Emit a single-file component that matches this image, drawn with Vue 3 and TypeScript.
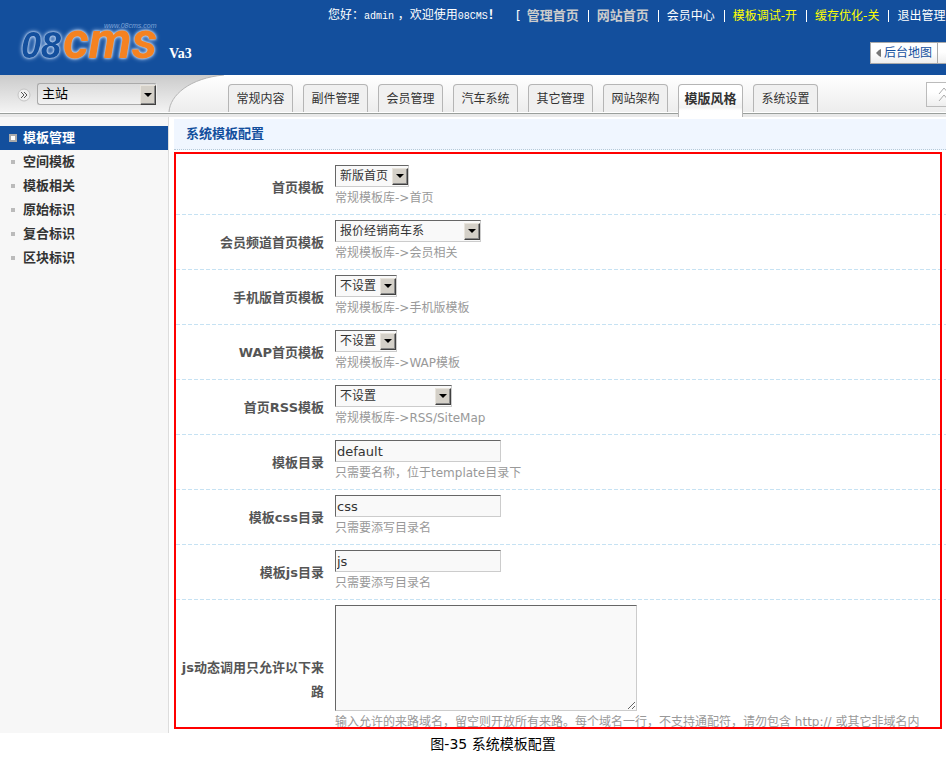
<script setup lang="ts">
import { ref } from 'vue'

interface Field {
  id: string
  label: string
  kind: 'select' | 'text' | 'area'
  value: string
  size?: string
  hint: string
}

const topLinks = [
  { text: '管理首页', tone: 'strong' },
  { text: '网站首页', tone: 'strong' },
  { text: '会员中心', tone: 'plain' },
  { text: '模板调试-开', tone: 'warn' },
  { text: '缓存优化-关', tone: 'warn' },
  { text: '退出管理', tone: 'plain' },
]
const tabs = ['常规内容', '副件管理', '会员管理', '汽车系统', '其它管理', '网站架构', '模版风格', '系统设置']
const menu = ['模板管理', '空间模板', '模板相关', '原始标识', '复合标识', '区块标识']
const activeTab = ref('模版风格')
const activeItem = ref('模板管理')

const fields = ref<Field[]>([
  { id: 'home', label: '首页模板', kind: 'select', value: '新版首页', size: 'w-sm', hint: '常规模板库->首页' },
  { id: 'member', label: '会员频道首页模板', kind: 'select', value: '报价经销商车系', size: 'w-lg', hint: '常规模板库->会员相关' },
  { id: 'mobile', label: '手机版首页模板', kind: 'select', value: '不设置', size: 'w-xs', hint: '常规模板库->手机版模板' },
  { id: 'wap', label: 'WAP首页模板', kind: 'select', value: '不设置', size: 'w-xs', hint: '常规模板库->WAP模板' },
  { id: 'rss', label: '首页RSS模板', kind: 'select', value: '不设置', size: 'w-md', hint: '常规模板库->RSS/SiteMap' },
  { id: 'dir', label: '模板目录', kind: 'text', value: 'default', hint: '只需要名称，位于template目录下' },
  { id: 'css', label: '模板css目录', kind: 'text', value: 'css', hint: '只需要添写目录名' },
  { id: 'js', label: '模板js目录', kind: 'text', value: 'js', hint: '只需要添写目录名' },
  { id: 'origin', label: 'js动态调用只允许以下来路', kind: 'area', value: '', hint: '输入允许的来路域名，留空则开放所有来路。每个域名一行，不支持通配符，请勿包含 http:// 或其它非域名内' },
])
</script>

<template>
  <div class="page">
    <header class="banner">
      <div class="brand">
        <svg class="logo" width="150" height="50" viewBox="0 0 150 50" role="img" aria-label="08CMS">
          <g class="logo-glow">
            <text class="logo-num" x="5" y="43">08</text>
            <text class="logo-cms" x="47" y="43">cms</text>
          </g>
          <text class="logo-url" x="88" y="13">www.08cms.com</text>
        </svg>
        <span class="version">Va3</span>
      </div>
      <div class="banner-side">
        <nav class="top-links">
          <span class="greet">您好：<span class="mono">admin</span> ，欢迎使用<span class="mono">08CMS</span><b>！</b></span>
          <span class="bracket">[</span>
          <template v-for="(link, i) in topLinks" :key="link.text">
            <span v-if="i" class="bar"></span>
            <a href="#" :class="link.tone">{{ link.text }}</a>
          </template>
        </nav>
        <div class="map-buttons">
          <button type="button" class="map">
            <svg width="5" height="8" viewBox="0 0 5 8"><path d="M5 0v8L3 7L0 4L3 1z" fill="#777" /></svg>后台地图
          </button>
          <span class="map-rest"></span>
        </div>
      </div>
    </header>

    <div class="toolbar">
      <div class="site">
        <svg width="14" height="14" viewBox="0 0 14 14">
          <circle cx="7" cy="7" r="6" fill="#f0f0f0" stroke="#c4c4c4" />
          <path d="M4 4l3 3-3 3M7 4l3 3-3 3" fill="none" stroke="#555" />
        </svg>
        <span class="picker site-picker">
          <select aria-label="站点"><option>主站</option></select>
          <span class="arrow"></span>
        </span>
      </div>
      <svg class="curve" width="56" height="37" viewBox="0 0 56 37">
        <defs>
          <linearGradient id="corner-fill" gradientUnits="userSpaceOnUse" x1="0" y1="0" x2="0" y2="37">
            <stop offset="0" stop-color="#cbcbcb" />
            <stop offset="1" stop-color="#f3f3f3" />
          </linearGradient>
        </defs>
        <path d="M0 0H56C22 3 2 20 1 37H0z" fill="url(#corner-fill)" />
        <path d="M1 37C2 20 22 3 56 0" fill="none" stroke="#b5b5b5" />
      </svg>
      <nav class="tabs">
        <button v-for="t in tabs" :key="t" type="button" :class="{ active: t === activeTab }" @click="activeTab = t">{{ t }}</button>
      </nav>
      <button type="button" class="fold" aria-label="收起">
        <svg width="12" height="15" viewBox="0 0 12 15"><path d="M1 7l5-6 5 6M1 14l5-6 5 6" fill="none" stroke="#aaa" /></svg>
      </button>
    </div>

    <div class="body">
      <aside class="side">
        <a v-for="m in menu" :key="m" href="#" :class="{ active: m === activeItem }" @click.prevent="activeItem = m">{{ m }}</a>
      </aside>
      <main class="main">
        <h1>系统模板配置</h1>
        <form class="form" @submit.prevent>
          <div v-for="f in fields" :key="f.id" class="row" :class="f.kind">
            <label :for="f.id">{{ f.label }}</label>
            <div class="cell">
              <span v-if="f.kind === 'select'" class="picker" :class="f.size">
                <select :id="f.id" v-model="f.value"><option>{{ f.value }}</option></select>
                <span class="arrow"></span>
              </span>
              <input v-else-if="f.kind === 'text'" :id="f.id" v-model="f.value" type="text" />
              <textarea v-else :id="f.id" v-model="f.value"></textarea>
              <p>{{ f.hint }}</p>
            </div>
          </div>
        </form>
      </main>
    </div>
    <p class="caption">图-35 系统模板配置</p>
  </div>
</template>

<style>
body {
  margin: 0;
  background: #fff;
}
</style>

<style scoped>
* {
  box-sizing: border-box;
}
.page {
  display: flex;
  flex-direction: column;
  height: 100vh;
  overflow: hidden;
  font: 12px/20px "DejaVu Sans", "Noto Sans CJK SC", sans-serif;
  color: #333;
}
button,
select,
input,
textarea {
  font: inherit;
  color: inherit;
}
a {
  text-decoration: none;
}
.banner {
  display: flex;
  flex: none;
  height: 75px;
  background: #134f9d;
  color: #fff;
}
.brand {
  display: flex;
  align-items: flex-end;
  flex: none;
  width: 328px;
  padding: 0 0 10px 16px;
}
.logo {
  overflow: visible;
}
.logo-glow {
  filter: drop-shadow(0 0 1px #dce8f8) drop-shadow(0 0 2px #a9c6ee);
}
.logo-num {
  font: italic bold 36px "Liberation Sans", sans-serif;
  fill: #134f9d;
}
.logo-cms {
  font: italic bold 51px Roboto, sans-serif;
  fill: #f58220;
}
.logo-url {
  font: italic 7px "Liberation Sans", sans-serif;
  fill: #7fa5d8;
}
.version {
  margin-left: 3px;
  font: bold 14px/22px "Liberation Serif", serif;
}
.banner-side {
  display: flex;
  flex: 1;
  flex-direction: column;
  min-width: 0;
}
.top-links {
  display: flex;
  align-items: center;
  height: 32px;
  overflow: hidden;
  white-space: nowrap;
}
.mono {
  font-family: "Liberation Mono", monospace;
  font-size: 10px;
}
.greet {
  flex: none;
  width: 188px;
}
.bracket {
  margin-right: 6px;
}
.bar {
  flex: none;
  width: 1px;
  height: 12px;
  margin: 0 8px 0 9px;
  background: #fff;
}
.strong {
  color: #ccc;
  font-size: 13px;
  font-weight: bold;
}
.plain {
  color: #fff;
}
.warn {
  color: #ff0;
}
.map-buttons {
  display: flex;
  justify-content: flex-end;
  margin-top: 10px;
}
.map {
  display: flex;
  align-items: center;
  gap: 3px;
  height: 22px;
  padding: 0 5px;
  border: 1px solid #aaa;
  background: linear-gradient(#fff 45%, #eee);
  color: #134f9d;
  white-space: nowrap;
}
.map-rest {
  width: 8px;
  border: solid #aaa;
  border-width: 1px 0;
  background: linear-gradient(#fff 45%, #eee);
}
.toolbar {
  display: flex;
  flex: none;
  height: 42px;
  border-bottom: 3px solid #e9e9e9;
  background: linear-gradient(#fff, #ececec);
  box-shadow: inset 0 -1px #9a9f9c, inset 0 -2px #fff;
}
.site {
  display: flex;
  flex: none;
  gap: 6px;
  width: 168px;
  height: 37px;
  padding: 8px 0 0 17px;
  background: linear-gradient(#cbcbcb, #f3f3f3);
}
.site > svg {
  margin-top: 5px;
}
.curve {
  flex: none;
}
.tabs {
  display: flex;
  flex: 1;
  gap: 10px;
  padding: 9px 0 0 4px;
}
.tabs button {
  flex: none;
  width: 65px;
  height: 28px;
  padding: 0;
  border: 1px solid #b5b5b5;
  border-bottom: 0;
  border-radius: 4px 4px 0 0;
  background: #f0f0f0;
  white-space: nowrap;
}
.tabs button.active {
  position: relative;
  height: 33px;
  padding-bottom: 4px;
  background: linear-gradient(#fff 30%, #f2f2f2 70%, #fff 80%);
  font-size: 13px;
  font-weight: bold;
}
.fold {
  display: flex;
  align-items: center;
  justify-content: flex-start;
  flex: none;
  width: 20px;
  height: 25px;
  margin-top: 7px;
  padding: 0 0 0 11px;
  overflow: hidden;
  border: 1px solid #bbb;
  border-right: 0;
  background: linear-gradient(#fff 40%, #eee);
}
.fold svg {
  flex: none;
}
.picker {
  position: relative;
  display: flex;
  align-items: center;
  height: 22px;
  border: 1px solid #ccc;
  border-top-color: #666;
  border-left-color: #666;
  background: #f9f9f9;
}
.picker select {
  width: 100%;
  height: 20px;
  padding: 0 0 0 4px;
  border: 0;
  background: transparent;
  appearance: none;
}
.arrow {
  position: absolute;
  right: 0;
  top: 2px;
  width: 16px;
  height: 17px;
  border: 1px solid #e8e4dc;
  border-right-color: #404040;
  border-bottom-color: #404040;
  background: #d4d0c8;
  box-shadow: inset -1px -1px #888;
  pointer-events: none;
}
.arrow::after {
  content: "";
  position: absolute;
  left: 3px;
  top: 5px;
  border: 4px solid transparent;
  border-top-color: #000;
  border-bottom: 0;
}
.site-picker {
  width: 120px;
  border-color: #aaa #eee #aaa #aaa;
  border-radius: 3px;
  background: linear-gradient(#dcdcdc, #f2f2f2);
  color: #000;
  font-size: 13px;
}
.site-picker .arrow {
  top: 1px;
  height: 20px;
}
.site-picker .arrow::after {
  top: 7px;
}
.w-xs {
  width: 62px;
}
.w-sm {
  width: 74px;
}
.w-md {
  width: 117px;
}
.w-lg {
  width: 146px;
}
.body {
  display: flex;
  flex: 1;
  min-height: 0;
}
.side {
  flex: none;
  width: 169px;
  padding-top: 9px;
  border-right: 1px solid #ddd;
  background: #f7f7f7;
}
.side a {
  display: flex;
  align-items: center;
  gap: 8px;
  height: 24px;
  padding-left: 11px;
  color: #333;
  font-size: 13px;
  font-weight: bold;
}
.side a::before {
  content: "";
  width: 4px;
  height: 4px;
  background: #bbb;
}
.side a.active {
  gap: 6px;
  padding-left: 9px;
  background: #134f9d;
  color: #fff;
}
.side a.active::before {
  box-sizing: border-box;
  width: 8px;
  height: 8px;
  border: 2px solid #aaa;
  background: #fff;
}
.main {
  display: flex;
  flex: 1;
  flex-direction: column;
  min-width: 0;
  padding: 2px 0 4px 5px;
}
h1 {
  flex: none;
  height: 31px;
  margin: 0 0 2px;
  padding-left: 12px;
  border-bottom: 1px dotted #b5c9d8;
  background: #f0f6ff;
  color: #134f9d;
  font-size: 13px;
  line-height: 30px;
}
.form {
  position: relative;
  flex: 1;
  min-height: 0;
  padding: 8px 0 0 2px;
  overflow: hidden;
}
.form::after {
  content: "";
  position: absolute;
  inset: 0 4px 0 0;
  border: 2px solid #f00;
  pointer-events: none;
}
.row {
  display: grid;
  grid-template-columns: 148px 1fr;
  column-gap: 11px;
  align-items: center;
  height: 55px;
  background: repeating-linear-gradient(90deg, #c6e2f3 0 4px, transparent 4px 6px) bottom / 100% 1px no-repeat;
}
.row label {
  padding-left: 4px;
  color: #555;
  font-size: 13px;
  font-weight: bold;
  line-height: 24px;
  text-align: right;
}
.cell {
  align-self: start;
  padding-top: 5px;
}
.cell p {
  margin: 1px 0 0;
  color: #999;
  white-space: nowrap;
}
.cell input,
.cell textarea {
  display: block;
  border: 1px solid #ccc;
  border-top-color: #666;
  border-left-color: #666;
  background: #f9f9f9;
}
.cell input {
  width: 166px;
  height: 22px;
  padding: 0 1px;
  font-size: 13px;
}
.cell textarea {
  width: 302px;
  height: 106px;
}
.row.area {
  height: 160px;
}
.caption {
  flex: none;
  height: 28px;
  margin: 0;
  padding-left: 40px;
  color: #000;
  font-size: 14px;
  line-height: 22px;
  text-align: center;
}
</style>
